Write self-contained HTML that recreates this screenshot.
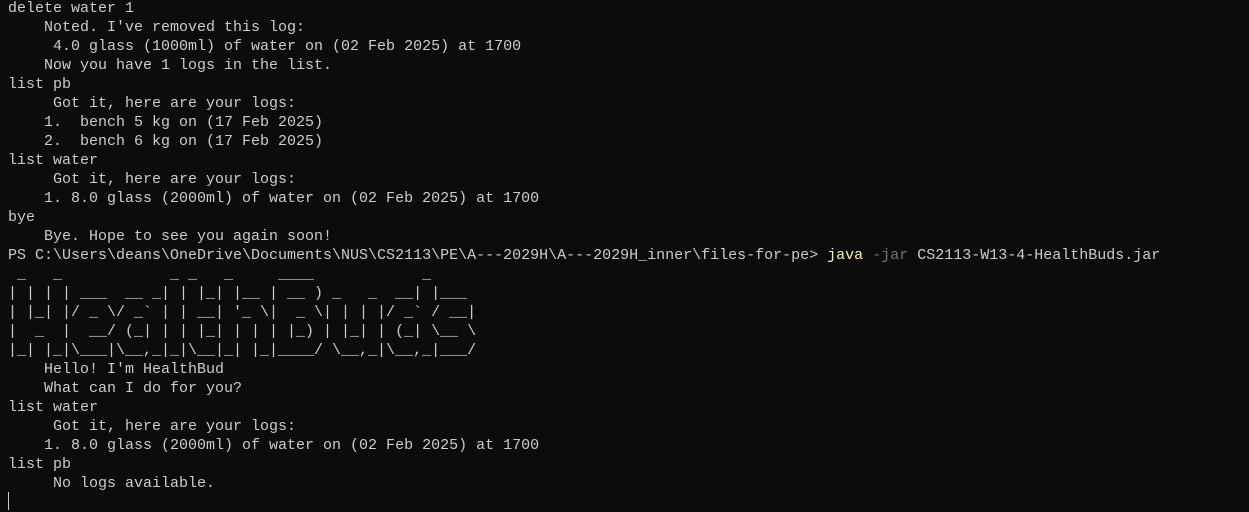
<!DOCTYPE html>
<html><head><style>
html,body{margin:0;padding:0;background:#0c0c0c;width:1249px;height:512px;overflow:hidden}
pre{position:absolute;left:8px;top:-1px;margin:0;font-family:"Liberation Mono",monospace;font-size:15px;line-height:19px;color:#cccccc}
.y{color:#f9f1a5}.g{color:#767676}
.cur{position:absolute;left:8px;top:492px;width:1px;height:18px;background:#cccccc}
</style></head><body>
<pre>delete water 1
    Noted. I've removed this log:
     4.0 glass (1000ml) of water on (02 Feb 2025) at 1700
    Now you have 1 logs in the list.
list pb
     Got it, here are your logs:
    1.  bench 5 kg on (17 Feb 2025)
    2.  bench 6 kg on (17 Feb 2025)
list water
     Got it, here are your logs:
    1. 8.0 glass (2000ml) of water on (02 Feb 2025) at 1700
bye
    Bye. Hope to see you again soon!
PS C:\Users\deans\OneDrive\Documents\NUS\CS2113\PE\A---2029H\A---2029H_inner\files-for-pe&gt; <span class="y">java</span> <span class="g">-jar</span> CS2113-W13-4-HealthBuds.jar
 _   _            _ _   _     ____            _
| | | | ___  __ _| | |_| |__ | __ ) _   _  __| |___
| |_| |/ _ \/ _` | | __| '_ \|  _ \| | | |/ _` / __|
|  _  |  __/ (_| | | |_| | | | |_) | |_| | (_| \__ \
|_| |_|\___|\__,_|_|\__|_| |_|____/ \__,_|\__,_|___/
    Hello! I'm HealthBud
    What can I do for you?
list water
     Got it, here are your logs:
    1. 8.0 glass (2000ml) of water on (02 Feb 2025) at 1700
list pb
     No logs available.
</pre>
<div class="cur"></div>
</body></html>
